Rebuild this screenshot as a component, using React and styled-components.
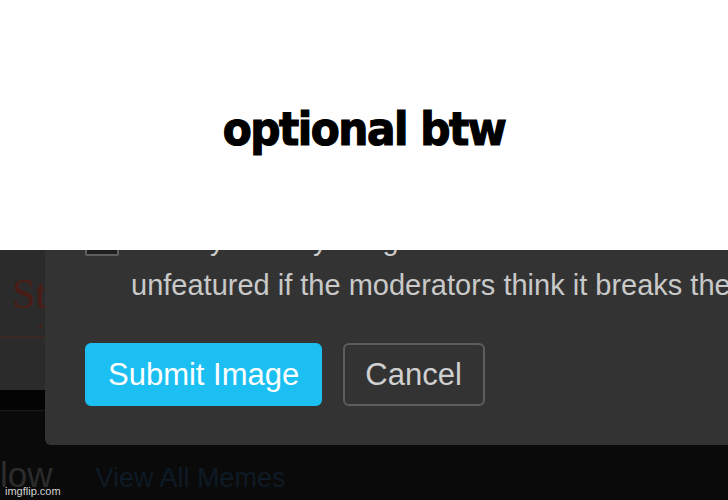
import React from 'react';
import styled, { createGlobalStyle } from 'styled-components';

const GlobalStyle = createGlobalStyle`
  html, body {
    margin: 0;
    padding: 0;
    background: #fff;
  }
  body {
    width: 728px;
    height: 500px;
    overflow: hidden;
  }
`;

const Meme = styled.div`
  width: 728px;
  height: 500px;
  display: flex;
  flex-direction: column;
  overflow: hidden;
`;

const Caption = styled.div`
  height: 250px;
  background: #fff;
  display: flex;
  align-items: center;
  justify-content: center;
`;

const CaptionText = styled.h1`
  margin: 0;
  padding-top: 6px;
  font-family: "DejaVu Sans Condensed", "DejaVu Sans", sans-serif;
  font-stretch: condensed;
  font-weight: 700;
  font-size: 47px;
  letter-spacing: -1.5px;
  color: #000;
  -webkit-text-stroke: 1.2px #000;
`;

const Shot = styled.div`
  position: relative;
  height: 250px;
  overflow: hidden;
  display: flex;
  flex-direction: column;
  background: #0a0a0a;
  font-family: "Liberation Sans", Arial, sans-serif;
`;

const SiteHeader = styled.div`
  height: 140px;
  background: #2b2b2b;
  display: flex;
  flex-direction: column;
`;

const LogoBlock = styled.div`
  height: 88px;
  box-sizing: border-box;
  padding: 23px 0 0 12px;
  border-bottom: 2px solid #3a2824;
`;

const Logo = styled.div`
  font-family: "Liberation Serif", "Times New Roman", serif;
  font-size: 42px;
  line-height: 1;
  color: #4a1c15;
`;

const LogoDot = styled.div`
  width: 3px;
  height: 3px;
  margin: 10px 0 0 27px;
  border-radius: 50%;
  background: #4a1c15;
`;

const NavStrip = styled.div`
  height: 20px;
  background: #040404;
  border-bottom: 1px solid #1a1a1a;
`;

const Footer = styled.div`
  display: flex;
  align-items: baseline;
  gap: 43px;
  padding-top: 46px;
`;

const FooterText = styled.span`
  font-size: ${p => p.size}px;
  line-height: 1;
  color: ${p => p.color};
`;

const Dialog = styled.div`
  position: absolute;
  left: 45px;
  top: -50px;
  width: 720px;
  box-sizing: border-box;
  padding: 18px 0 39px 40px;
  background: #333;
  border-radius: 6px;
`;

const CheckRow = styled.div`
  display: flex;
  align-items: flex-start;
`;

const Checkbox = styled.div`
  flex: none;
  width: 34px;
  height: 32px;
  margin-top: 6px;
  box-sizing: border-box;
  border: 2px solid #5e5e5e;
  border-radius: 2px;
  background: #1f1f1f;
`;

const Label = styled.div`
  margin-left: 12px;
  font-size: 29px;
  line-height: 45px;
  color: #c9c9c9;
  white-space: nowrap;
`;

const ButtonRow = styled.div`
  display: flex;
  gap: 21px;
  margin-top: 35px;
`;

const Button = styled.button`
  height: 63px;
  box-sizing: border-box;
  display: flex;
  align-items: center;
  font-family: "Liberation Sans", Arial, sans-serif;
  font-size: 31px;
  border-radius: 6px;
  cursor: pointer;
  border: 2px solid ${p => (p.primary ? '#1bbff1' : '#5d5d5d')};
  background: ${p => (p.primary ? '#1bbff1' : 'transparent')};
  color: ${p => (p.primary ? '#fff' : '#d0d0d0')};
  padding: ${p => (p.primary ? '0 21px' : '0 21px 0 20px')};
`;

const Watermark = styled.div`
  position: absolute;
  left: 5px;
  bottom: 3px;
  font-size: 11px;
  line-height: 1;
  color: rgba(235, 235, 235, 0.9);
`;

export default function App() {
  return (
    <Meme>
      <GlobalStyle />
      <Caption>
        <CaptionText>optional btw</CaptionText>
      </Caption>
      <Shot>
        <SiteHeader>
          <LogoBlock>
            <Logo>St</Logo>
            <LogoDot />
          </LogoBlock>
        </SiteHeader>
        <NavStrip />
        <Footer>
          <FooterText size={35} color="#2c2c2c">low</FooterText>
          <FooterText size={27} color="#0e1a25">View All Memes</FooterText>
        </Footer>
        <Dialog>
          <CheckRow>
            <Checkbox />
            <Label>
              <div>I certify that my image follows the rules and understand it may be</div>
              <div>unfeatured if the moderators think it breaks the rules.</div>
            </Label>
          </CheckRow>
          <ButtonRow>
            <Button primary>Submit Image</Button>
            <Button>Cancel</Button>
          </ButtonRow>
        </Dialog>
        <Watermark>imgflip.com</Watermark>
      </Shot>
    </Meme>
  );
}
